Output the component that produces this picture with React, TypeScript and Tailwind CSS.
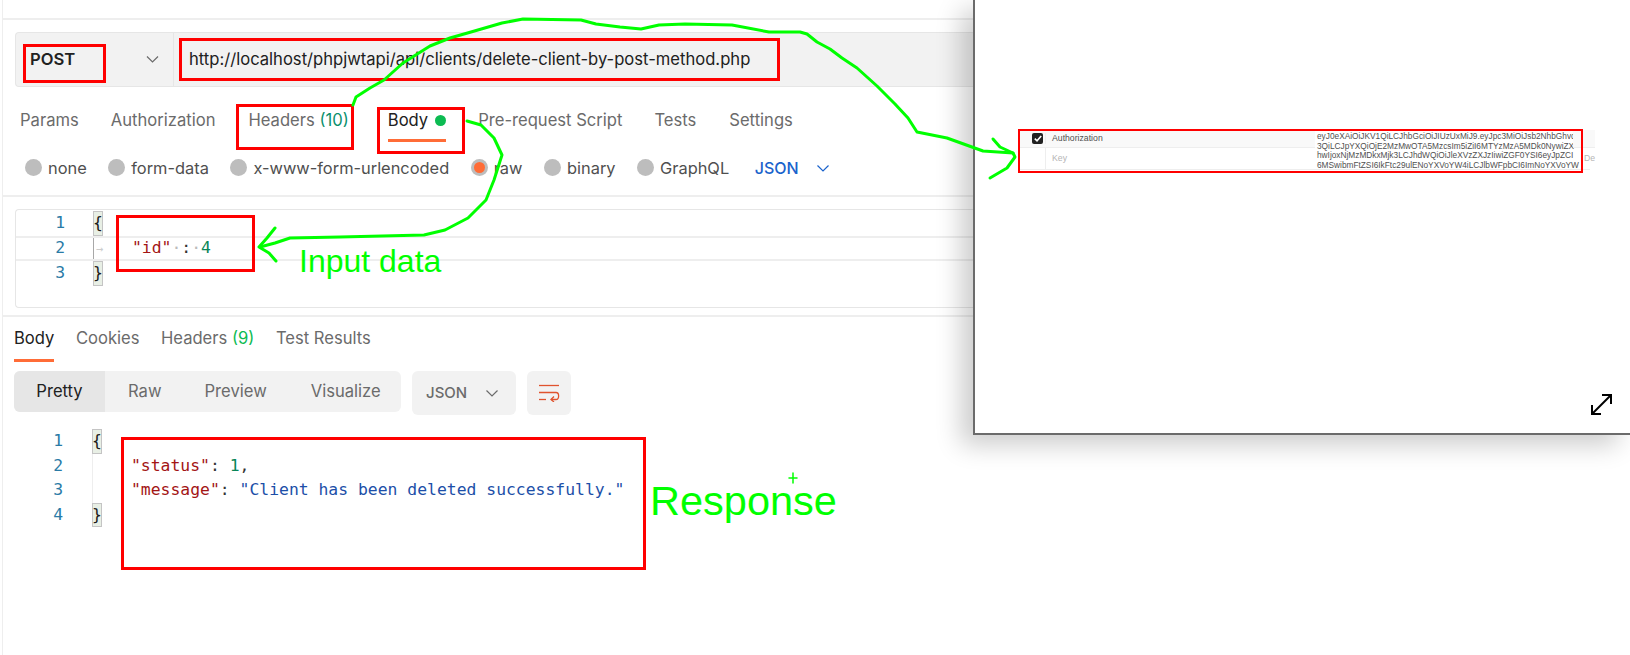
const Chevron = ({ className }: { className: string }) => (
  <svg viewBox="0 0 12 7" fill="none" stroke="currentColor" strokeWidth="1.2" className={className}>
    <path d="M0.5 0.5 L6 6 L11.5 0.5" />
  </svg>
);

const Radio = ({ label, on }: { label: string; on?: boolean }) => (
  <div className="flex items-center gap-[6px]">
    <span className="flex h-[17px] w-[17px] items-center justify-center rounded-full bg-[#bdbdbd]">
      {on && <span className="h-[11px] w-[11px] rounded-full bg-[#ff6c37]" />}
    </span>
    <span className="text-[16.4px] text-[#4f4f4f]">{label}</span>
  </div>
);

const Brace = ({ ch }: { ch: string }) => (
  <span className="flex h-full w-[10px] items-center justify-center border border-[#c4c4c4] bg-[#e8efe5] text-[#1a1a1a]">
    {ch}
  </span>
);

const token = [
  'eyJ0eXAiOiJKV1QiLCJhbGciOiJIUzUxMiJ9.eyJpc3MiOiJsb2NhbGhvc',
  '3QiLCJpYXQiOjE2MzMwOTA5MzcsIm5iZiI6MTYzMzA5MDk0NywiZX',
  'hwIjoxNjMzMDkxMjk3LCJhdWQiOiJleXVzZXJzIiwiZGF0YSI6eyJpZCI',
  '6MSwibmFtZSI6IkFtc29ulENoYXVoYW4iLCJlbWFpbCI6ImNoYXVoYW',
];

export default function App() {
  return (
    <div className="relative h-[655px] w-full overflow-hidden bg-white font-['Inter',sans-serif] text-[16.6px]">
      <div className="ml-[2px] flex h-full flex-col border-l border-[#eeeeee]">
        <div className="h-[20px] shrink-0 border-b-2 border-[#eeeeee]" />

        {/* request bar */}
        <div className="mt-[12px] flex h-[55px] shrink-0 items-stretch pl-[12px]">
          <div className="flex w-[158px] items-center justify-between rounded-l border border-r-0 border-[#e6e6e6] bg-[#f2f2f2] pl-[14px] pr-[14px]">
            <span className="font-semibold text-[#212121]">POST</span>
            <Chevron className="h-[7px] w-[13px] text-[#6b6b6b]" />
          </div>
          <div className="flex flex-1 items-center border border-[#e6e6e6] bg-[#f2f2f2] pl-[15px] text-[#212121]">
            http://localhost/phpjwtapi/api/clients/delete-client-by-post-method.php
          </div>
        </div>

        {/* request tabs */}
        <div className="flex h-[64px] shrink-0 items-center pt-[3px] pl-[17px] text-[#6b6b6b]">
          <span>Params</span>
          <span className="ml-[32px]">Authorization</span>
          <span className="ml-[33px]">
            Headers <span className="text-[#0a8f6c]">(10)</span>
          </span>
          <span className="relative ml-[39px] text-[#212121]">
            Body
            <span className="absolute -bottom-[9px] left-0 h-[3px] w-[58px] bg-[#ff6c37]" />
          </span>
          <span className="ml-[7px] h-[11px] w-[11px] rounded-full bg-[#0cbb52]" />
          <span className="ml-[32px]">Pre-request Script</span>
          <span className="ml-[32px]">Tests</span>
          <span className="ml-[33px]">Settings</span>
        </div>

        {/* body modes */}
        <div className="flex h-[46px] shrink-0 items-center gap-[21.5px] border-b-2 border-[#eeeeee] pb-[10px] pl-[22px]">
          <Radio label="none" />
          <Radio label="form-data" />
          <Radio label="x-www-form-urlencoded" />
          <Radio label="raw" on />
          <Radio label="binary" />
          <Radio label="GraphQL" />
          <span className="ml-[4px] flex items-center gap-[18px] text-[16px] font-medium text-[#1a63cc]">
            JSON
            <Chevron className="h-[7px] w-[12px]" />
          </span>
        </div>

        {/* request editor */}
        <div className="ml-[12px] mt-[12px] h-[99px] shrink-0 rounded-l border border-r-0 border-[#e6e6e6] pt-[1px] font-['DejaVu_Sans_Mono',monospace] text-[16.4px]">
          <div className="flex h-[25px] items-center">
            <span className="w-[49px] text-right text-[#2a7ba6]">1</span>
            <span className="ml-[28px] h-full"><Brace ch="{" /></span>
          </div>
          <div className="flex h-[25px] items-center border-y-2 border-[#eeeeee]">
            <span className="w-[49px] text-right text-[#2a7ba6]">2</span>
            <span className="ml-[28px] flex h-full w-[39px] items-center border-l border-[#a8a8a8] pl-[2px] text-[12px] text-[#cccccc]">→</span>
            <span className="text-[#a31515]">"id"</span>
            <span className="text-[#bbbbbb]">·</span>
            <span className="text-[#333333]">:</span>
            <span className="text-[#bbbbbb]">·</span>
            <span className="text-[#098658]">4</span>
          </div>
          <div className="flex h-[25px] items-center">
            <span className="w-[49px] text-right text-[#2a7ba6]">3</span>
            <span className="ml-[28px] h-full"><Brace ch="}" /></span>
          </div>
        </div>

        <div className="mt-[7px] h-[2px] shrink-0 bg-[#eeeeee]" />

        {/* response tabs */}
        <div className="mt-[8px] flex h-[33px] shrink-0 items-start pl-[11px] pt-[1px] text-[#6b6b6b]">
          <span className="relative text-[#212121]">
            Body
            <span className="absolute -bottom-[11px] left-0 h-[3px] w-full bg-[#ff6c37]" />
          </span>
          <span className="ml-[21.5px]">Cookies</span>
          <span className="ml-[21.5px]">
            Headers <span className="text-[#0cbb52]">(9)</span>
          </span>
          <span className="ml-[21.5px]">Test Results</span>
        </div>

        {/* response toolbar */}
        <div className="mt-[13px] flex h-[44px] shrink-0 items-start pl-[11px]">
          <div className="flex h-[41px] w-[387px] items-center overflow-hidden rounded-md bg-[#f2f2f2] text-[#6b6b6b]">
            <span className="flex h-full w-[91px] items-center justify-center bg-[#e6e6e6] text-[#212121]">Pretty</span>
            <span className="ml-[23px]">Raw</span>
            <span className="ml-[43px]">Preview</span>
            <span className="ml-[44px]">Visualize</span>
          </div>
          <div className="ml-[11px] flex h-[44px] w-[104px] items-center justify-between rounded-md bg-[#f2f2f2] pl-[14px] pr-[18px] text-[15px] font-medium text-[#6b6b6b]">
            JSON
            <Chevron className="h-[7px] w-[12px]" />
          </div>
          <div className="ml-[11px] flex h-[44px] w-[44px] items-center justify-center rounded-md bg-[#f2f2f2]">
            <svg width="22" height="18" viewBox="0 0 22 18" fill="none" stroke="#e0532e" strokeWidth="1.3">
              <path d="M1 1.5 H21" />
              <path d="M1 8.5 H18 C21.5 8.5 21.5 15.5 18 15.5 H13" />
              <path d="M1 15.5 H8" />
              <path d="M16 12.5 L13 15.5 L16 18" />
            </svg>
          </div>
        </div>

        {/* response code */}
        <div className="mt-[14px] font-['DejaVu_Sans_Mono',monospace] text-[16.4px]">
          <div className="flex h-[24.6px] items-center">
            <span className="w-[60px] text-right text-[#2a7ba6]">1</span>
            <span className="ml-[29px] h-full"><Brace ch="{" /></span>
          </div>
          <div className="flex h-[24.6px] items-center">
            <span className="w-[60px] text-right text-[#2a7ba6]">2</span>
            <span className="ml-[29px] h-full w-[39px] border-l border-[#eeeeee]" />
            <span className="text-[#a31515]">"status"</span>
            <span className="text-[#333333]">:&nbsp;</span>
            <span className="text-[#098658]">1</span>
            <span className="text-[#333333]">,</span>
          </div>
          <div className="flex h-[24.6px] items-center">
            <span className="w-[60px] text-right text-[#2a7ba6]">3</span>
            <span className="ml-[29px] h-full w-[39px] border-l border-[#eeeeee]" />
            <span className="text-[#a31515]">"message"</span>
            <span className="text-[#333333]">:&nbsp;</span>
            <span className="text-[#1c4fa8]">"Client has been deleted successfully."</span>
          </div>
          <div className="flex h-[24.6px] items-center">
            <span className="w-[60px] text-right text-[#2a7ba6]">4</span>
            <span className="ml-[29px] h-full"><Brace ch="}" /></span>
          </div>
        </div>
      </div>

      {/* pasted screenshot window */}
      <div className="absolute left-[973px] top-0 flex h-[435px] w-[657px] flex-col border-b-2 border-l-2 border-[#6b6b6b] bg-white pl-[44px] pt-[130px] shadow-[-12px_10px_24px_rgba(0,0,0,0.2)]">
        <div className="flex h-[40px] w-[571px] border-b border-[#eeeeee] font-['Liberation_Sans',sans-serif] text-[8.7px]">
          <div className="flex w-[296px] shrink-0 flex-col">
            <div className="flex h-[18px] items-center border-b border-[#eeeeee] bg-[#f9f9f9]">
              <span className="flex w-[27px] justify-end border-r border-[#eeeeee]">
                <span className="mr-[2px] flex h-[11px] w-[11px] items-center justify-center rounded-[2px] bg-[#212121]">
                  <svg width="8" height="7" viewBox="0 0 8 7" fill="none" stroke="white" strokeWidth="1.6">
                    <path d="M0.8 3.6 L3 5.8 L7.2 1" />
                  </svg>
                </span>
              </span>
              <span className="pl-[6px] text-[#505050]">Authorization</span>
            </div>
            <div className="flex flex-1 items-center">
              <span className="h-full w-[27px] border-r border-[#eeeeee]" />
              <span className="pl-[6px] text-[#b5b5b5]">Key</span>
            </div>
          </div>
          <div className="w-[258px] shrink-0 bg-white pl-[2px] pt-[2px] text-[8.3px] leading-[9.6px] text-[#505050]">
            {token.map(line => (
              <div key={line} className="whitespace-nowrap">{line}</div>
            ))}
          </div>
          <div className="flex flex-1 flex-col">
            <div className="h-[18px] border-b border-[#eeeeee] bg-[#f9f9f9]" />
            <div className="flex flex-1 items-center pl-[11px] text-[#b5b5b5]">De</div>
          </div>
        </div>
      </div>

      {/* red annotation boxes */}
      <div className="absolute left-[23px] top-[44px] h-[39px] w-[83px] border-[3px] border-[#ff0000]" />
      <div className="absolute left-[179px] top-[38px] h-[43px] w-[601px] border-[3px] border-[#ff0000]" />
      <div className="absolute left-[236px] top-[104px] h-[46px] w-[118px] border-[3px] border-[#ff0000]" />
      <div className="absolute left-[377px] top-[107px] h-[47px] w-[88px] border-[3px] border-[#ff0000]" />
      <div className="absolute left-[116px] top-[215px] h-[57px] w-[139px] border-[3px] border-[#ff0000]" />
      <div className="absolute left-[121px] top-[437px] h-[133px] w-[525px] border-[3px] border-[#ff0000]" />
      <div className="absolute left-[1018px] top-[129px] h-[44px] w-[565px] border-2 border-[#ff0000]" />

      {/* green hand drawn notes */}
      <svg className="pointer-events-none absolute left-0 top-0" width="1630" height="655" fill="none" stroke="#00ff00" strokeWidth="3" strokeLinejoin="round" strokeLinecap="round">
        <path d="M353 105 L356 97 L370 88 L384 80 L403 63 L430 46 L450 38 L471 32 L502 23 L523 19 L581 20 L596 24 L620 27 L641 29 L659 25 L685 24 L732 25 L769 32 L800 32 L807 34 L817 42 L830 49 L842 58 L857 68 L877 86 L895 104 L908 118 L917 132 L947 138 L983 151 L1013 153" />
        <path d="M993 139 L1000 147 L1013 153 L1015 157 L1007 168 L990 178" />
        <path d="M467 121 L481 125 L494 138 L502 155 L494 180 L486 200 L468 218 L445 230 L424 235 L340 237 L290 238 L275 243 L260 247" />
        <path d="M275 228 L267 238 L259 247 L269 253 L276 261" />
        <path d="M789 478 H797 M793 473 V483" strokeWidth="1.5" />
      </svg>

      {/* expand icon */}
      <svg className="absolute left-[1590px] top-[393px]" width="23" height="23" viewBox="0 0 23 23" fill="none" stroke="#000000" strokeWidth="2">
        <path d="M2 21 L21 2" />
        <path d="M12 2 H21 V11" />
        <path d="M2 12 V21 H11" />
      </svg>

      <span className="absolute left-[299px] top-[243px] font-['Liberation_Sans',sans-serif] text-[32px] leading-[37px] text-[#00ff00]">Input data</span>
      <span className="absolute left-[650px] top-[477px] font-['Liberation_Sans',sans-serif] text-[41.5px] leading-[47px] text-[#00ff00]">Response</span>
    </div>
  );
}
